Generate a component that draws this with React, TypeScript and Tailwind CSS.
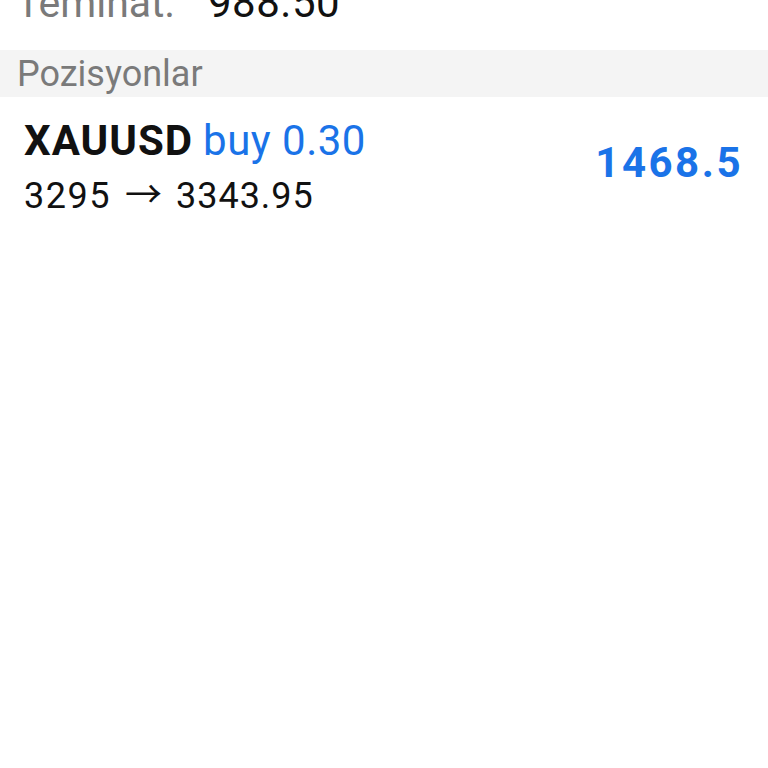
export default function App() {
  return (
    <div className="min-h-screen w-full bg-white font-['Roboto',sans-serif]">
      {/* Margin summary, partly scrolled off the top */}
      <div className="-mt-[18px] flex items-baseline pl-[16px] text-[41px] leading-[42px]">
        <span className="w-[192px] text-[#7a7a7a]">Teminat:</span>
        <span className="text-[42px] tracking-[0.5px] text-[#111]">988.50</span>
      </div>

      <div className="mt-[26px] flex h-[47px] items-center bg-[#f4f4f4] px-[17px] text-[36px] leading-none text-[#7a7a7a]">
        Pozisyonlar
      </div>

      <div className="flex items-center justify-between pl-[24px] pr-[25px] pt-[20px]">
        <div className="flex flex-col">
          <div className="flex items-baseline gap-[10px] text-[42px] leading-[48px]">
            <span className="font-bold tracking-[1px] text-[#111]">XAUUSD</span>
            <span className="tracking-[0.5px] text-[#1a73e8]">buy 0.30</span>
          </div>
          <div className="mt-[9px] flex items-baseline text-[36px] leading-[44px] tracking-[1.5px] text-[#111]">
            <span>3295</span>
            <span className="ml-[14px] mr-[14px] font-['Noto_Sans_CJK_SC',sans-serif] text-[37px] leading-none tracking-normal">→</span>
            <span className="tracking-[1px]">3343.95</span>
          </div>
        </div>
        <div className="mb-[9px] text-[42px] font-bold leading-none tracking-[2.5px] text-[#1a73e8]">1468.5</div>
      </div>
    </div>
  );
}
